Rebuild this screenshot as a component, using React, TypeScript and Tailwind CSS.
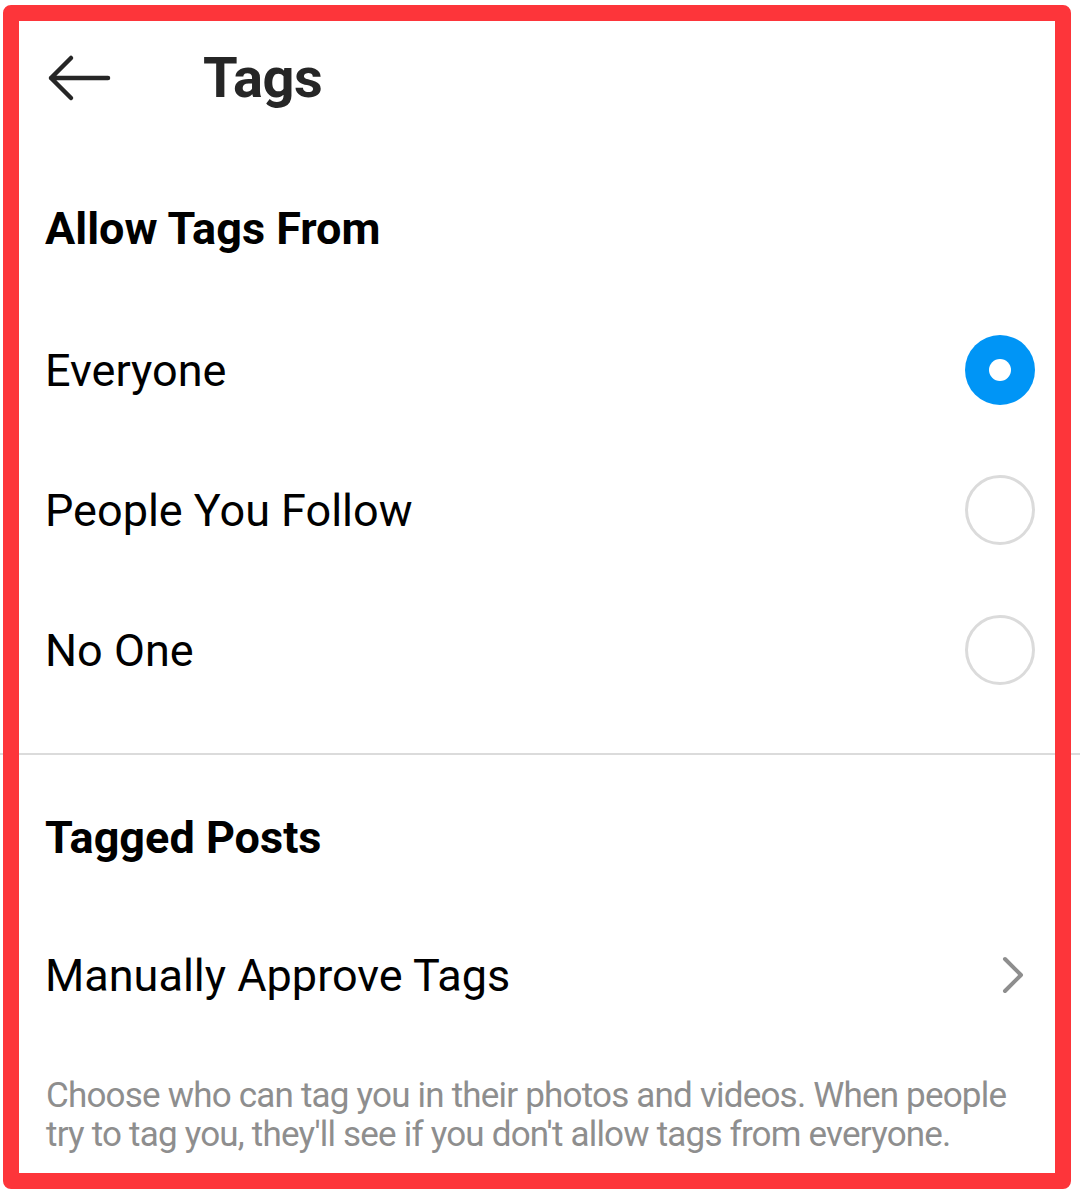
const options = ["Everyone", "People You Follow", "No One"];

const Radio = ({ checked }: { checked: boolean }) => {
  if (checked) {
    return (
      <div className="flex h-[70px] w-[70px] items-center justify-center rounded-full bg-[#0095f6]">
        <div className="h-[22px] w-[22px] rounded-full bg-white" />
      </div>
    );
  }
  return <div className="h-[70px] w-[70px] rounded-full border-[3px] border-[#dbdbdb]" />;
};

export default function App() {
  const selected = "Everyone";

  return (
    <div
      className="relative h-[1193px] w-[1080px] overflow-hidden bg-white text-black"
      style={{ fontFamily: "Roboto, 'Noto Sans', sans-serif" }}
    >
      <div className="flex h-[156px] items-center pl-[47px]">
        <svg width="64" height="50" viewBox="0 0 64 50" className="text-[#262626]">
          <path
            d="M4 25 H61 M4 25 L24 5 M4 25 L24 45"
            fill="none"
            stroke="currentColor"
            strokeWidth="4.5"
            strokeLinecap="round"
            strokeLinejoin="round"
          />
        </svg>
        <h1 className="ml-[92px] text-[56px] font-bold leading-none tracking-[-0.5px] text-[#262626]">Tags</h1>
      </div>

      <div className="flex h-[144px] items-center px-[45px]">
        <h2 className="text-[45px] font-bold leading-none">Allow Tags From</h2>
      </div>

      {options.map((option) => (
        <div key={option} className="flex h-[140px] items-center justify-between pl-[45px] pr-[45px]">
          <span className="text-[45px] leading-none">{option}</span>
          <Radio checked={option === selected} />
        </div>
      ))}

      <div className="mt-[33px] h-[2px] w-full bg-[#dbdbdb]" />

      <div className="flex h-[164px] items-center px-[45px]">
        <h2 className="text-[45px] font-bold leading-none">Tagged Posts</h2>
      </div>

      <div className="flex h-[112px] items-center justify-between pl-[45px] pr-[55px]">
        <span className="text-[45px] leading-none">Manually Approve Tags</span>
        <svg width="24" height="38" viewBox="0 0 24 38" className="text-[#8e8e8e]">
          <path
            d="M4 3 L20 19 L4 35"
            fill="none"
            stroke="currentColor"
            strokeWidth="4"
            strokeLinecap="round"
            strokeLinejoin="round"
          />
        </svg>
      </div>

      <p className="mt-[45px] pl-[46px] pr-[60px] text-[35px] leading-[39px] tracking-[-0.8px] text-[#8e8e8e]">
        Choose who can tag you in their photos and videos. When people try to tag you, they'll see if you don't
        allow tags from everyone.
      </p>

      <div className="pointer-events-none absolute bottom-[4px] left-[3px] right-[9px] top-[5px] rounded-[8px] border-[16px] border-[#fd353a]" />
    </div>
  );
}
